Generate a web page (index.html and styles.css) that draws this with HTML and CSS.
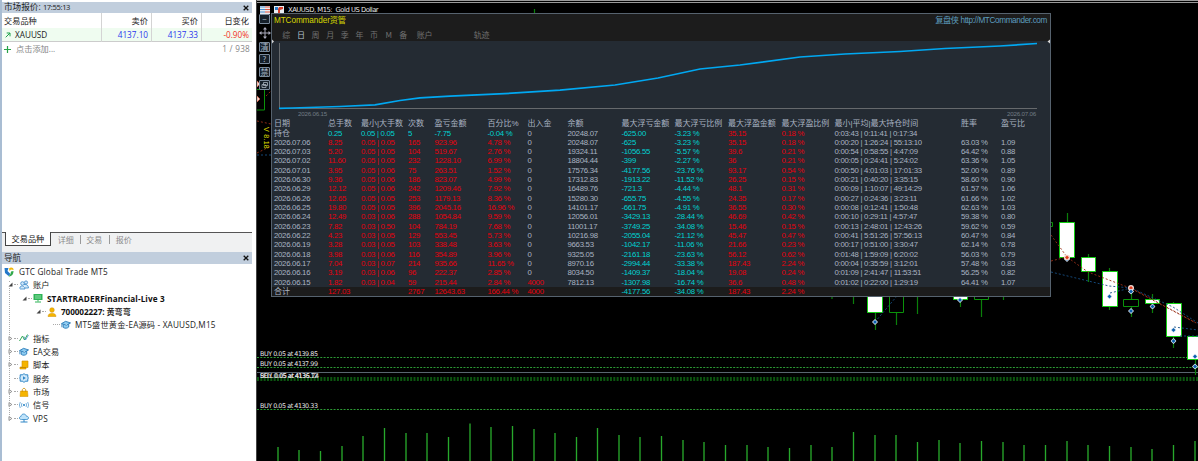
FILE: index.html
```html
<!DOCTYPE html>
<html lang="zh-CN">
<head>
<meta charset="utf-8">
<title>XAUUSD, M15</title>
<link rel="stylesheet" href="styles.css">
</head>
<body>
<svg class="defs" aria-hidden="true">
  <symbol id="cap" viewBox="0 0 11 10"><path d="M.5 3.5 5 1l5.5 1.7L6 5.2zM2.5 4.4v3.3c2 1.4 4.400 1 6-.5V4M1 4v3.500" fill="#8fcdf2" stroke="#2b7cb8"/></symbol>
  <symbol id="open" viewBox="0 0 5 5"><path d="M4.500.5v4H.5z" fill="#444"/></symbol>
  <symbol id="shut" viewBox="0 0 5 5"><path d="M1 .5v4L3.800 2.500z" fill="#fff" stroke="#777" stroke-width=".8"/></symbol>
  <symbol id="x" viewBox="0 0 6 6"><path d="M.7.7l4.600 4.600M5.300.7.7 5.300" stroke="#111" stroke-width="1.300"/></symbol>
  <symbol id="buy" viewBox="-3 -3 6 6"><path d="M0-3 3 0 0 3-3 0z" fill="#dfeaf5"/><path d="M0-2 2 0 0 2-2 0z" fill="#0b5fae"/></symbol>
  <symbol id="sell" viewBox="-3 -3 6 6"><circle r="3" fill="#f3d9d2"/><path d="M0-2 2 0 0 2-2 0z" fill="#e23b1c"/></symbol>
</svg>
<div class="app">
  <aside class="side">
    <div class="bar"><span>市场报价: <em>17:55:13</em></span><svg class="x"><use href="#x"/></svg></div>
    <div class="quote head"><span>交易品种</span><span>卖价</span><span>买价</span><span>日变化</span></div>
    <div class="quote live"><span><svg class="up" viewBox="0 0 6 6"><path d="M.7 5.300 5 1M1.700 1H5v3.300" fill="none" stroke="#1fa34a"/></svg>XAUUSD</span><span class="blue">4137.10</span><span class="blue">4137.33</span><span class="red">-0.90%</span></div>
    <div class="add"><span><svg class="plus" viewBox="0 0 7 7"><path d="M3.500 0v7M0 3.500h7" stroke="#27a348" stroke-width="1.200"/></svg>点击添加...</span><span class="count">1 / 938</span></div>
    <div class="space"></div>
    <div class="tabs"><span class="on">交易品种</span><span>详细</span><span>交易</span><span>报价</span></div>
    <div class="bar nav"><span>导航</span><svg class="x"><use href="#x"/></svg></div>
    <div class="tree">
      <div class="node root"><svg class="ic" viewBox="0 0 10 10"><path d="M.5 1h4l-1 3 3 3-2 2L1 6z" fill="#2478c8"/><path d="M5 1.500C7-.5 10 1 9.500 3L7 2.500 5.500 4z" fill="#f2b90d"/><path d="M7 4.500 9.500 4C9.500 7 8 9.500 4.500 9.500L6.500 7z" fill="#31a84b"/></svg><span class="lat">GTC Global Trade MT5</span></div>
      <div class="node l1"><svg class="tw"><use href="#open"/></svg><i></i><svg class="ic" viewBox="0 0 10 10"><path d="M.7 8.500C.7 5 5.500 5 6 9H1M5 4.500c3-.5 4.300 1 4.500 3.500H6" fill="#cfe8fa" stroke="#3b88c8" stroke-width=".8"/><circle cx="3.500" cy="3.500" r="1.800" fill="#cfe8fa" stroke="#3b88c8" stroke-width=".8"/><circle cx="7" cy="2.500" r="1.600" fill="#cfe8fa" stroke="#3b88c8" stroke-width=".8"/></svg><span>账户</span></div>
      <div class="node l2"><svg class="tw"><use href="#open"/></svg><i></i><svg class="ic" viewBox="0 0 10 10"><path d="M.5 1h9v6h-9z" fill="#2fb457"/><path d="M2 3h6M2 5h6" stroke="#b7efc6" stroke-width=".7"/><path d="M5 7v1.500M2 9h6" stroke="#2fb457"/></svg><span class="bold server">STARTRADERFinancial-Live 3</span></div>
      <div class="node l3"><svg class="tw"><use href="#open"/></svg><i></i><svg class="ic" viewBox="0 0 10 10"><circle cx="5" cy="3" r="2.300" fill="#f5b400" stroke="#cf8f00" stroke-width=".5"/><path d="M1 9.500C1 5 9 5 9 9.500z" fill="#f5b400" stroke="#cf8f00" stroke-width=".5"/></svg><span class="bold">700002227: <b>黄弯弯</b></span></div>
      <div class="node l4"><i></i><svg class="ic"><use href="#cap"/></svg><span class="lat">MT5<em>盛世黄金</em>-EA<em>源码</em> - XAUUSD,M15</span></div>
      <div class="node l1"><svg class="tw"><use href="#shut"/></svg><i></i><svg class="ic" viewBox="0 0 10 10"><path d="M.5 8 3.500 3l2 4 3-5.500" fill="none" stroke="#35aa55"/><path d="M5 3.500 6.500 7 9.500 2" fill="none" stroke="#4e94cf" stroke-width=".8"/></svg><span>指标</span></div>
      <div class="node l1"><svg class="tw"><use href="#shut"/></svg><i></i><svg class="ic"><use href="#cap"/></svg><span>EA交易</span></div>
      <div class="node l1"><svg class="tw"><use href="#shut"/></svg><i></i><svg class="ic" viewBox="0 0 10 10"><path d="M3 1h6v6.500H7V9H1V7h2z" fill="#f5b400" stroke="#cf8f00" stroke-width=".6"/><path d="M1.500 7.500H7" stroke="#b87800" stroke-width=".7"/></svg><span>脚本</span></div>
      <div class="node l1"><u></u><i></i><svg class="ic" viewBox="0 0 10 10"><path d="M5 .5 6.200 1.800 8.800 1.800V4.200L9.600 5 8.800 5.800V8.200H6.200L5 9.500 3.800 8.200H1.200V5.800L.4 5 1.200 4.200V1.800H3.800z" fill="#cfe8fa" stroke="#2f86c6"/><path d="M4 3.300 6.800 5 4 6.700z" fill="#2f86c6"/></svg><span>服务</span></div>
      <div class="node l1"><svg class="tw"><use href="#shut"/></svg><i></i><svg class="ic" viewBox="0 0 10 10"><path d="M1.500 4h7L9 9.500H1z" fill="#f5b400" stroke="#cf8f00" stroke-width=".5"/><path d="M3.300 5V2.500Q5-.5 6.700 2.500V5" fill="none" stroke="#cf8f00" stroke-width=".8"/></svg><span>市场</span></div>
      <div class="node l1"><svg class="tw"><use href="#shut"/></svg><i></i><svg class="ic" viewBox="0 0 10 10"><circle cx="5" cy="5" r="1.100" fill="#2f86c6"/><path d="M3 3Q1.800 5 3 7M7 3q1.200 2 0 4M1.300 2Q-.5 5 1.300 8M8.700 2q1.800 3 0 6" fill="none" stroke="#5ba0d4" stroke-width=".8"/></svg><span>信号</span></div>
      <div class="node l1"><svg class="tw"><use href="#shut"/></svg><i></i><svg class="ic" viewBox="0 0 10 10"><path d="M2.500 6.500C-.5 6.500 0 3.500 2 3.500 2.500 0 7 .5 7.300 3.200c3 0 2.800 3.300.5 3.300z" fill="#bfe3fa" stroke="#2f86c6" stroke-width=".8"/><path d="M5 6.500V9M1.500 9h7" stroke="#2f86c6"/></svg><span class="lat">VPS</span></div>
    </div>
  </aside>

  <main class="chart">
    <svg class="canvas" viewBox="257 0 941 461" width="941" height="461">
      <path class="dash" d="M257 357.500h941M257 367.500h941M257 409.500h941"/>
      <path class="band" d="M257 379h941"/>
      <path d="M257 372.500h941" stroke="#59656f"/>
      <path class="vol" d="M278 447v14M299 450v11M320.500 451v10M342 446v15M363 436v25M384.500 428v33M406 433v28M427 433v28M448.500 437v24M470 423.500v38M491 427v34M512.500 426v35M534 429v32M555 433v28M576.500 437v24M597.500 428v33M619 435v26M640 437v24M661.500 436v25M683 440v21M704 442v19M725.500 445v16M747 445v16M768 447v14M789.500 448v13M811 445v16M832 447v14M853.500 432v29M875 435v26M896 435v26M917.500 442v19M939 440v21M960 443v18M981.500 441v20M1003 442v19M1024 445v16M1045.500 445v16M1067 441v20M1088 445v16M1109.500 446v15M1131 447v14M1152 449v12M1173.500 445v16M1195 441v20"/>
      <path class="wick" d="M534.500 9v4M832 290v9M853.500 290v14M875.500 290v40M896.500 313v12M917.500 290v24M960.500 290v17M981.500 299v18M1003.500 290v10M1067.500 213v10M1088.500 254v28M1109.500 268v42M1131.500 292v25M1152.500 294v19M1173.500 302v46M1195.500 336v39"/>
      <path class="hollow" d="M889.500 280h14v32.500h-14zM974.500 280h14v19.500h-14zM1040.500 222.500h12v4h-12zM1123.500 299.500h15v7h-15zM250 89.500h14.500v20.500H250"/>
      <path class="solid" d="M867.500 280h15v32.500h-15zM953.500 280h14v19.500h-14zM1059.500 222.500h15v35h-15zM1081.500 257.500h14v14h-14zM1102.500 271.500h15v35h-15zM1145.500 299.500h14v4h-14zM1166.500 303.500h15v33h-15zM1187.500 336.500h15v23h-15z"/>
      <path class="sellline" d="M1051 235l16 22 21 15 42 16 64 34M1051 261l16-4M1131 288l67 36M257 121l14 3M257 153l14-7M266 96l5-5"/>
      <path class="buyline" d="M1051 272l58 14 22 2 42 19 25 16M1110 293l21-5M1174 327l24 3M1180 336h18M875 322l22-26M257 155h14"/>
      <use href="#buy" x="872" y="319" width="6" height="6"/><use href="#buy" x="957" y="297" width="6" height="6"/><use href="#buy" x="1064" y="256" width="6" height="6"/><use href="#sell" x="1064" y="254.500" width="6" height="6"/><use href="#buy" x="1106.500" y="293.500" width="6" height="6"/><use href="#sell" x="1128" y="285" width="6" height="6"/><use href="#buy" x="1128" y="288.500" width="6" height="6"/><use href="#buy" x="1128" y="308" width="6" height="6"/><use href="#buy" x="1149.500" y="303.500" width="6" height="6"/><use href="#buy" x="1170.500" y="327" width="6" height="6"/><use href="#buy" x="1170.500" y="338" width="6" height="6"/><use href="#buy" x="1192" y="353.500" width="6" height="6"/><use href="#buy" x="1192" y="363.500" width="6" height="6"/>
      <path d="M257 81l3 3-3 3zM257 96l3 3-3 3z" fill="#f3d9d2" stroke="#e05a40" stroke-width=".6"/>
      <g class="deal"><text x="260" y="356" textLength="58">BUY 0.05 at 4139.85</text><text x="260" y="366" textLength="58">BUY 0.05 at 4137.99</text><text x="260" y="377.500" textLength="58">SELL 0.05 at 4136.12</text><text x="260" y="378" textLength="59">BUY 0.05 at 4135.74</text><text x="260" y="408" textLength="58">BUY 0.05 at 4130.33</text></g>
    </svg>
    <div class="caption">
      <svg width="26" height="10" viewBox="0 0 26 10"><path d="M0 1h10v8H0z" fill="#e8edf3"/><path d="M0 2h5M0 4.500h5M0 7h5" stroke="#4a90d0" stroke-width="1.200"/><path d="M5 2h5M5 4.500h5M5 7h5" stroke="#e05540" stroke-width="1.200"/><path d="M14 1h10v8H14z" fill="#e8edf3"/><path d="M15 2h3v3h-3" fill="#2f80cc"/><path d="M19 2h4v2l-3 1v3h-2V4z" fill="#d8402c"/></svg>
      <span>XAUUSD, M15:&nbsp; Gold US Dollar</span>
    </div>
    <div class="work">
      <div class="tools">
        <span class="tool">−</span>
        <svg class="move" viewBox="0 0 12 12"><path d="M6 0 8 2.500H4zM6 12l2-2.500H4zM0 6l2.500-2v4zM12 6 9.500 4v4z" fill="#aab"/><path d="M6 1v10M1 6h10" stroke="#aab"/></svg>
        <span class="tool">清</span><span class="tool">?</span><span class="tool">禁</span>
        <span class="tool"><svg width="8" height="8" viewBox="0 0 8 8"><path d="M2.500 1.500h4v3h-4zM1 3.500h4v3H1z" fill="none" stroke="#aab4c0" stroke-width=".8"/></svg></span>
        <span class="version">V 8.18</span>
      </div>
      <section class="panel">
        <header>
          <div class="title"><span>MTCommander资管</span><a>复盘侠 http://MTCommander.com</a></div>
          <nav><span>综</span><span class="sel">日</span><span>周</span><span>月</span><span>季</span><span>年</span><span>币</span><span>M</span><span>备</span><span class="wide">账户</span><span class="track">轨迹</span></nav>
        </header>
        <svg class="equity" viewBox="272 41 778 68" width="778" height="68"><path d="M279.500 43v65.500H1037" fill="none" stroke="#66696c"/><path d="M279 108.300 292 108l48-1.500 35-1.700 25-4.300 20-2.700 30-1.600 62-3 48-3 55-5.200 43-7 42-9 40-4 60-8 45-3 55-2.500 45-3 55-2.500 37-2.500" fill="none" stroke="#00a8f2" stroke-width="1.700"/><path d="M272 39.500l2 2-2 2zM1050 39.500l-2.500 2 2.500 2z" fill="#d5d5d5"/></svg>
        <div class="dates"><span>2026.06.15</span><span>2026.07.06</span></div>
        <div class="grid">
          <div class="row hd"><span>日期</span><span>总手数</span><span>最小|大手数</span><span>次数</span><span>盈亏金额</span><span>百分比%</span><span>出入金</span><span>余额</span><span>最大浮亏金额</span><span>最大浮亏比例</span><span>最大浮盈金额</span><span>最大浮盈比例</span><span>最小|平均|最大持仓时间</span><span>胜率</span><span>盈亏比</span></div>
          <div class="row hold"><span>持仓</span><span>0.25</span><span>0.05 | 0.05</span><span>5</span><span>-7.75</span><span>-0.04 %</span><span>0</span><span>20248.07</span><span>-625.00</span><span>-3.23 %</span><span>35.15</span><span>0.18 %</span><span>0:03:43 | 0:11:41 | 0:17:34</span><span></span><span></span></div>
          <div class="row"><span>2026.07.06</span><span>8.25</span><span>0.05 | 0.05</span><span>165</span><span>923.96</span><span>4.78 %</span><span>0</span><span>20248.07</span><span>-625</span><span>-3.23 %</span><span>35.15</span><span>0.18 %</span><span>0:00:20 | 1:26:24 | 55:13:10</span><span>63.03 %</span><span>1.09</span></div>
          <div class="row"><span>2026.07.03</span><span>5.20</span><span>0.05 | 0.05</span><span>104</span><span>519.67</span><span>2.76 %</span><span>0</span><span>19324.11</span><span>-1056.55</span><span>-5.57 %</span><span>39.6</span><span>0.21 %</span><span>0:00:54 | 0:58:55 | 4:47:09</span><span>64.42 %</span><span>0.88</span></div>
          <div class="row"><span>2026.07.02</span><span>11.60</span><span>0.05 | 0.05</span><span>232</span><span>1228.10</span><span>6.99 %</span><span>0</span><span>18804.44</span><span>-399</span><span>-2.27 %</span><span>36</span><span>0.21 %</span><span>0:00:05 | 0:24:41 | 5:24:02</span><span>63.36 %</span><span>1.05</span></div>
          <div class="row"><span>2026.07.01</span><span>3.95</span><span>0.05 | 0.06</span><span>75</span><span>263.51</span><span>1.52 %</span><span>0</span><span>17576.34</span><span>-4177.56</span><span>-23.76 %</span><span>93.17</span><span>0.54 %</span><span>0:00:50 | 4:01:03 | 17:01:33</span><span>52.00 %</span><span>0.89</span></div>
          <div class="row"><span>2026.06.30</span><span>9.36</span><span>0.05 | 0.06</span><span>186</span><span>823.07</span><span>4.99 %</span><span>0</span><span>17312.83</span><span>-1913.22</span><span>-11.52 %</span><span>26.25</span><span>0.15 %</span><span>0:00:21 | 0:40:20 | 3:35:15</span><span>58.60 %</span><span>0.90</span></div>
          <div class="row"><span>2026.06.29</span><span>12.12</span><span>0.05 | 0.06</span><span>242</span><span>1209.46</span><span>7.92 %</span><span>0</span><span>16489.76</span><span>-721.3</span><span>-4.44 %</span><span>48.1</span><span>0.31 %</span><span>0:00:09 | 1:10:07 | 49:14:29</span><span>61.57 %</span><span>1.06</span></div>
          <div class="row"><span>2026.06.26</span><span>12.65</span><span>0.05 | 0.05</span><span>253</span><span>1179.13</span><span>8.36 %</span><span>0</span><span>15280.30</span><span>-655.75</span><span>-4.55 %</span><span>24.35</span><span>0.17 %</span><span>0:00:27 | 0:24:36 | 3:23:11</span><span>61.66 %</span><span>1.02</span></div>
          <div class="row"><span>2026.06.25</span><span>19.80</span><span>0.05 | 0.05</span><span>396</span><span>2045.16</span><span>16.96 %</span><span>0</span><span>14101.17</span><span>-661.75</span><span>-4.91 %</span><span>36.55</span><span>0.30 %</span><span>0:00:08 | 0:12:41 | 1:50:48</span><span>62.63 %</span><span>1.03</span></div>
          <div class="row"><span>2026.06.24</span><span>12.49</span><span>0.03 | 0.06</span><span>288</span><span>1054.84</span><span>9.59 %</span><span>0</span><span>12056.01</span><span>-3429.13</span><span>-28.44 %</span><span>46.69</span><span>0.42 %</span><span>0:00:10 | 0:29:11 | 4:57:47</span><span>59.38 %</span><span>0.80</span></div>
          <div class="row"><span>2026.06.23</span><span>7.82</span><span>0.03 | 0.50</span><span>104</span><span>784.19</span><span>7.68 %</span><span>0</span><span>11001.17</span><span>-3749.25</span><span>-34.08 %</span><span>15.46</span><span>0.15 %</span><span>0:00:13 | 2:48:01 | 12:43:26</span><span>59.62 %</span><span>0.59</span></div>
          <div class="row"><span>2026.06.22</span><span>4.23</span><span>0.03 | 0.05</span><span>129</span><span>553.45</span><span>5.73 %</span><span>0</span><span>10216.98</span><span>-2055.04</span><span>-21.12 %</span><span>45.47</span><span>0.47 %</span><span>0:00:41 | 5:51:26 | 57:56:13</span><span>60.47 %</span><span>0.84</span></div>
          <div class="row"><span>2026.06.19</span><span>3.28</span><span>0.03 | 0.05</span><span>103</span><span>338.48</span><span>3.63 %</span><span>0</span><span>9663.53</span><span>-1042.17</span><span>-11.06 %</span><span>21.66</span><span>0.23 %</span><span>0:00:17 | 0:51:00 | 3:30:47</span><span>62.14 %</span><span>0.78</span></div>
          <div class="row"><span>2026.06.18</span><span>3.98</span><span>0.03 | 0.06</span><span>116</span><span>354.89</span><span>3.96 %</span><span>0</span><span>9325.05</span><span>-2161.18</span><span>-23.63 %</span><span>56.12</span><span>0.62 %</span><span>0:01:48 | 1:59:09 | 6:20:02</span><span>56.03 %</span><span>0.79</span></div>
          <div class="row"><span>2026.06.17</span><span>7.04</span><span>0.03 | 0.07</span><span>214</span><span>935.66</span><span>11.65 %</span><span>0</span><span>8970.16</span><span>-2994.44</span><span>-33.38 %</span><span>187.43</span><span>2.24 %</span><span>0:00:04 | 0:35:59 | 3:12:01</span><span>57.48 %</span><span>0.83</span></div>
          <div class="row"><span>2026.06.16</span><span>3.19</span><span>0.03 | 0.06</span><span>96</span><span>222.37</span><span>2.85 %</span><span>0</span><span>8034.50</span><span>-1409.37</span><span>-18.04 %</span><span>19.08</span><span>0.24 %</span><span>0:01:09 | 2:41:47 | 11:53:51</span><span>56.25 %</span><span>0.82</span></div>
          <div class="row dep"><span>2026.06.15</span><span>1.82</span><span>0.03 | 0.04</span><span>59</span><span>215.44</span><span>2.84 %</span><span>4000</span><span>7812.13</span><span>-1307.98</span><span>-16.74 %</span><span>36.6</span><span>0.48 %</span><span>0:01:02 | 0:22:00 | 1:29:19</span><span>64.41 %</span><span>1.07</span></div>
          <div class="row dep total"><span>合计</span><span>127.03</span><span></span><span>2767</span><span>12643.63</span><span>166.44 %</span><span>4000</span><span></span><span>-4177.56</span><span>-34.08 %</span><span>187.43</span><span>2.24 %</span><span></span><span></span><span></span></div>
        </div>
      </section>
    </div>
  </main>
</div>
</body>
</html>
```
FILE: styles.css
```css
* { box-sizing: border-box; }
body { margin: 0; background: #f3f4f5; overflow: hidden; }
.defs { position: absolute; width: 0; height: 0; }
.app { display: flex; width: 1198px; height: 461px; }
em { font-style: normal; }

/* Market watch and navigator */
.side {
  width: 257px; height: 461px; padding-top: 2px; padding-right: 5px;
  display: flex; flex-direction: column;
  border-left: 2px solid #a9bdd3; background: #fff; color: #222;
  font: 8.2px/13px "Open Sans", "Noto Sans CJK SC", sans-serif;
  white-space: nowrap;
}
.bar { display: flex; flex: none; height: 11px; align-items: center; justify-content: space-between; padding: 0 3px 0 2px; background: #c1cedd; line-height: 11px; font-size: 8.6px; }
.bar em { font-size: 7.6px; letter-spacing: -.35px; }
.x { width: 6px; height: 6px; }
.quote { display: grid; grid-template-columns: 99px 50px 50px 51px; height: 14px; line-height: 14px; flex: none; }
.quote span { text-align: right; padding-right: 3px; border-left: 1px solid #d4d4d4; }
.quote span:first-child { text-align: left; padding-left: 2px; border-left: 0; }
.head { height: 15px; line-height: 16px; }
.live { background: #effcf0; border-bottom: 1px solid #ccc; }
.up { width: 6px; height: 6px; margin: 0 4px 0 1px; }
.blue { color: #2a35ee; }
.red { color: #f3301f; }
.add { display: flex; justify-content: space-between; padding: 0 2px; color: #858585; line-height: 14px; }
.plus { width: 7px; height: 7px; margin-right: 5px; vertical-align: -1px; }
.count { letter-spacing: .25px; }
.space { flex: 1; }
.tabs { display: flex; flex: none; height: 20px; background: #f0f1f2; border-top: 1px solid #555; line-height: 14px; color: #8a8a8a; }
.tabs span { height: 13px; padding: 0 6px; font-size: 8px; }
.tabs span + span { padding-left: 7px; }
.tabs span + span + span { padding: 0 7px 0 5.500px; border-left: 1px solid #999; height: 9px; margin-top: 2px; line-height: 10px; }
.tabs .on { height: 14px; margin: -1px 0 0 3px; padding: 0 5.500px; background: #fff; border: 1px solid #444; border-top: 0; color: #111; font-size: 8.200px; }
.nav { height: 12px; }
.tree { position: relative; flex: none; height: 197px; padding-top: 1px; }
.tree::before { content: ""; position: absolute; left: 7px; top: 17px; height: 134px; border-left: 1px dotted #aaa; }
.node { position: relative; display: flex; align-items: center; height: 13.330px; }
.ic { width: 10px; height: 10px; margin-right: 4px; flex: none; }
.tw { width: 5px; height: 5px; background: #fff; }
.node u { width: 5px; }
.node i { width: 4px; margin: 0 1px; border-top: 1px dotted #aaa; }
.root { padding-left: 2px; }
.root .ic { margin-right: 5px; }
.l1 { padding-left: 6px; }
.l2 { padding-left: 20px; }
.l3 { padding-left: 34px; }
.l4 { padding-left: 50px; }
.l4 i { width: 7px; }
.lat { letter-spacing: .18px; }
.bold { font-weight: 700; color: #111; letter-spacing: -.1px; }
.bold.server { letter-spacing: .1px; }
.bold b { font-weight: 500; }

/* Chart window */
.chart { position: relative; width: 941px; height: 461px; background: #000; border-top: 3px double #9a9a9a; outline: 1px solid #444; }
.canvas { position: absolute; left: 0; top: -3px; }
.dash { stroke: #2c9a34; stroke-dasharray: 2 1.330; }
.band { stroke: #0c5510; stroke-width: 4; stroke-dasharray: 2 1.330; }
.vol { stroke: #27a82b; stroke-width: 1.330; }
.wick { stroke: #0a7f0a; stroke-width: 1.200; }
.hollow { fill: #000; stroke: #0a930a; }
.solid { fill: #fff; stroke: #12cf12; }
.sellline, .buyline { fill: none; stroke: #9a3018; stroke-width: .9; stroke-dasharray: 2 2; }
.buyline { stroke: #164f85; }
.deal { fill: #e4e4e4; font: 6.400px "DejaVu Sans", sans-serif; }
.caption { position: relative; display: flex; align-items: center; height: 10px; margin-top: 2px; padding-left: 3px; gap: 2px; color: #e8e8e8; font: 6.800px/10px "DejaVu Sans", sans-serif; letter-spacing: -.48px; }
.work { position: relative; display: flex; margin-top: -2px; }
.tools { width: 14px; padding: .5px 1px 0 2px; display: flex; flex-direction: column; }
.tool { display: flex; align-items: center; justify-content: center; width: 11px; height: 10px; margin-bottom: 2.800px; border: 1px solid #7b8b9d; border-radius: 1px; background: #16202b; color: #aab8c8; font: 8px/8px "Noto Sans CJK SC", sans-serif; }
.tool:first-child { margin-bottom: 3px; }
.move { width: 12px; height: 12px; margin-bottom: 3px; flex: none; }
.version { margin: 34px 0 0 1px; writing-mode: vertical-rl; color: #e6e600; font: 7px/8px "Liberation Sans", sans-serif; letter-spacing: .3px; }
.panel { width: 780px; height: 284px; border: 1px solid #56626e; background: #242b33; color: #a9b3c2; font: 7.800px/9.330px "Liberation Sans", "Noto Sans CJK SC", sans-serif; letter-spacing: -.28px; white-space: nowrap; }
.panel header { height: 27px; background: #1c1c1c; }
.title { display: flex; justify-content: space-between; height: 14px; padding: 0 3px 0 2px; font-size: 8.200px; line-height: 14px; letter-spacing: -.1px; color: #d6d600; }
.title a { color: #5c9dbf; letter-spacing: -.37px; }
.panel nav { display: flex; padding-left: 7px; font: 8px/14px "Noto Sans CJK SC", sans-serif; letter-spacing: 0; color: #707070; }
.panel nav span { width: 14.630px; text-align: center; }
.panel nav .sel { color: #b5c3d2; }
.panel nav .wide { width: 28px; }
.panel nav .track { width: 28px; margin-left: 29px; }
.equity { display: block; height: 68px; overflow: visible; }
.dates { display: flex; justify-content: space-between; height: 9px; padding: 0 14px 0 26px; color: #717b85; font-size: 6.200px; letter-spacing: -.2px; }
.row { display: grid; grid-template-columns: 54px 33px 47px 26.500px 53px 40px 40px 54px 53px 53.500px 53.500px 53px 126.500px 40px 46px; height: 9.330px; padding-left: 2px; }
.row span:nth-child(n+2):nth-child(-n+6), .row span:nth-child(11), .row span:nth-child(12), .dep span:nth-child(7) { color: #e6000d; }
.row span:nth-child(9), .row span:nth-child(10), .hold span:nth-child(n+2):nth-child(-n+6) { color: #00d2d2; }
.hd, .hold span:first-child, .total span:first-child { font-size: 8px; letter-spacing: 0; }
.row.hd { height: 10.500px; line-height: 12px; letter-spacing: -.04px; }
.row.hd span:nth-child(n) { color: #a9b3c2; }
.row.hd span:nth-child(n+1):nth-child(-n+15) { color: #a9b3c2; }
.total { height: 9px; background: #1c1c1c; line-height: 10.500px; }
```
